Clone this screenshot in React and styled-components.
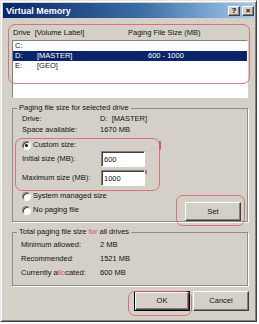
import React from "react";
import styled, { createGlobalStyle } from "styled-components";

const Global = createGlobalStyle`
  html, body { margin: 0; padding: 0; background: #fff; }
  body {
    font-family: "Liberation Sans", Arial, sans-serif;
    font-size: 7.5px;
    line-height: 10px;
    color: #111;
  }
  * { box-sizing: border-box; }
`;

const Window = styled.div`
  position: relative;
  width: 257px;
  height: 322px;
  background: #d4d0c8;
  border: 1px solid;
  border-color: #e6e4de #404040 #404040 #e6e4de;
  box-shadow: inset 1px 1px #fff, inset -1px -1px #808080;
  padding: 2px;
  display: flex;
  flex-direction: column;
`;

const TitleBar = styled.div`
  height: 15px;
  background: linear-gradient(90deg, #0a246a 0%, #3a6ea5 55%, #a6caf0 100%);
  display: flex;
  align-items: center;
  justify-content: space-between;
  padding: 0 0 0 3px;
`;

const Title = styled.span`
  color: #fff;
  font-weight: bold;
  font-size: 9px;
`;

const TitleButtons = styled.div`
  display: flex;
  gap: 2px;
`;

const TitleButton = styled.span`
  width: 12px;
  height: 10px;
  background: #d4d0c8;
  border: 1px solid;
  border-color: #fff #404040 #404040 #fff;
  box-shadow: inset -1px -1px #808080;
  display: flex;
  align-items: center;
  justify-content: center;
  font-size: 8px;
  font-weight: bold;
  line-height: 8px;
  color: #000;
`;

const Body = styled.div`
  flex: 1;
  display: flex;
  flex-direction: column;
  padding: 10px 5px 0 9px;
`;

const ListHeader = styled.div`
  display: grid;
  grid-template-columns: 115px 1fr;
  height: 10px;
  padding-left: 1px;
  margin-right: 1px;
`;

const List = styled.div`
  margin-top: 2px;
  margin-right: 1px;
  height: 58px;
  background: #fff;
  border: 1px solid;
  border-color: #808080 #fff #fff #808080;
`;

const Row = styled.div`
  display: grid;
  grid-template-columns: 22px 111px 1fr;
  height: 10px;
  padding-left: 2px;
  background: ${(p) => (p.$selected ? "#0a246a" : "transparent")};
  color: ${(p) => (p.$selected ? "#fff" : "#111")};
`;

const Group = styled.fieldset`
  margin: ${(p) => p.$top}px 1px 0 0;
  padding: ${(p) => p.$pad};
  border: 1px solid #8f8d88;
  box-shadow: 1px 1px 0 #fff;
  min-width: 0;
`;

const Legend = styled.legend`
  padding: 0 2px;
  margin-left: ${(p) => p.$shift}px;
  line-height: 10px;
`;

const InfoGrid = styled.div`
  display: grid;
  grid-template-columns: ${(p) => p.$col}px 1fr;
  row-gap: ${(p) => p.$gap}px;
  grid-auto-rows: 10px;
`;

const RadioRow = styled.div`
  display: flex;
  align-items: center;
  gap: 2px;
  height: 10px;
  margin-top: ${(p) => p.$top || 0}px;
`;

const Radio = styled.span`
  position: relative;
  width: 9px;
  height: 9px;
  border-radius: 50%;
  background: #fff;
  border: 1px solid;
  border-color: #808080 #fff #fff #808080;
  box-shadow: inset 1px 1px #404040;
  &::after {
    content: "";
    display: ${(p) => (p.$checked ? "block" : "none")};
    position: absolute;
    left: 2px;
    top: 2px;
    width: 3px;
    height: 3px;
    border-radius: 50%;
    background: #000;
  }
`;

const FieldRow = styled.div`
  display: grid;
  grid-template-columns: 79px 44px;
  align-items: center;
  height: 16px;
  margin-top: ${(p) => p.$top}px;
`;

const TextBox = styled.input`
  width: 44px;
  height: 16px;
  margin: 0;
  padding: 0 2px;
  background: #fff;
  border: 1px solid;
  border-color: #808080 #fff #fff #808080;
  box-shadow: inset 1px 1px #404040;
  font: inherit;
  color: #111;
  outline: none;
`;

const LowerSection = styled.div`
  display: flex;
  justify-content: space-between;
  align-items: flex-end;
  margin-top: 5px;
`;

const RadioColumn = styled.div`
  display: flex;
  flex-direction: column;
  gap: 4px;
  margin-bottom: 6px;
`;

const Button = styled.button`
  width: 56px;
  height: ${(p) => p.$h}px;
  margin: 0;
  padding: 0;
  background: #d4d0c8;
  border: 1px solid;
  border-color: ${(p) => (p.$default ? "#000" : "#fff #404040 #404040 #fff")};
  box-shadow: ${(p) =>
    p.$default
      ? "inset 1px 1px #fff, inset -1px -1px #404040, inset -2px -2px #808080"
      : "inset -1px -1px #808080"};
  font: inherit;
  color: #111;
  outline: none;
`;

const ButtonBar = styled.div`
  display: flex;
  justify-content: flex-end;
  gap: 3px;
  margin-top: 5px;
`;

const Mark = styled.span`
  color: #e0407f;
`;

const Annot = styled.div`
  position: absolute;
  left: ${(p) => p.$x}px;
  top: ${(p) => p.$y}px;
  width: ${(p) => p.$w}px;
  height: ${(p) => p.$h}px;
  border: 1.5px solid rgba(214, 98, 112, 0.85);
  border-radius: 7px;
  pointer-events: none;
`;

const Tick = styled.span`
  position: absolute;
  left: ${(p) => p.$x}px;
  top: ${(p) => p.$y}px;
  width: 2px;
  height: ${(p) => p.$h}px;
  background: #d9508a;
  border-radius: 1px;
`;

export default function App() {
  return (
    <>
      <Global />
      <Window>
        <TitleBar>
          <Title>Virtual Memory</Title>
          <TitleButtons>
            <TitleButton>?</TitleButton>
            <TitleButton>×</TitleButton>
          </TitleButtons>
        </TitleBar>
        <Body>
          <ListHeader>
            <span>Drive&nbsp; [Volume Label]</span>
            <span>Paging File Size (MB)</span>
          </ListHeader>
          <List>
            <Row>
              <span>C:</span>
              <span></span>
              <span></span>
            </Row>
            <Row $selected>
              <span>D:</span>
              <span>[MASTER]</span>
              <span>600 - 1000</span>
            </Row>
            <Row>
              <span>E:</span>
              <span>[GEO]</span>
              <span></span>
            </Row>
          </List>

          <Group $top={5} $pad="1px 6px 0 9px">
            <Legend $shift={-5}>Paging file size for selected drive</Legend>
            <InfoGrid $col={78} $gap={1}>
              <span>Drive:</span>
              <span>D:&nbsp; [MASTER]</span>
              <span>Space available:</span>
              <span>1670 MB</span>
            </InfoGrid>
            <RadioRow $top={5}>
              <Radio $checked />
              <span>Custom size:</span>
            </RadioRow>
            <FieldRow $top={1}>
              <span>Initial size (MB):</span>
              <TextBox defaultValue="600" readOnly />
            </FieldRow>
            <FieldRow $top={3}>
              <span>Maximum size (MB):</span>
              <TextBox defaultValue="1000" readOnly />
            </FieldRow>
            <LowerSection>
              <RadioColumn>
                <RadioRow>
                  <Radio />
                  <span>System managed size</span>
                </RadioRow>
                <RadioRow>
                  <Radio />
                  <span>No paging file</span>
                </RadioRow>
              </RadioColumn>
              <Button $h={19}>Set</Button>
            </LowerSection>
          </Group>

          <Group $top={5} $pad="3px 6px 7px 8px">
            <Legend $shift={-4}>
              Total paging file size <Mark>for</Mark> all drives
            </Legend>
            <InfoGrid $col={79} $gap={4}>
              <span>Minimum allowed:</span>
              <span>2 MB</span>
              <span>
                Recommended<Mark>:</Mark>
              </span>
              <span>1521 MB</span>
              <span>
                Currently a<Mark>llo</Mark>cated:
              </span>
              <span>600 MB</span>
            </InfoGrid>
          </Group>

          <ButtonBar>
            <Button $h={20} $default>
              OK
            </Button>
            <Button $h={20}>Cancel</Button>
          </ButtonBar>
        </Body>

        <Annot $x={7} $y={23} $w={242} $h={60} />
        <Annot $x={14} $y={137} $w={145} $h={53} />
        <Annot $x={175} $y={194} $w={69} $h={31} />
        <Annot $x={127} $y={290} $w={64} $h={25} />
        <Tick $x={158} $y={140} $h={9} />
        <Tick $x={144} $y={169} $h={4} />
      </Window>
    </>
  );
}
